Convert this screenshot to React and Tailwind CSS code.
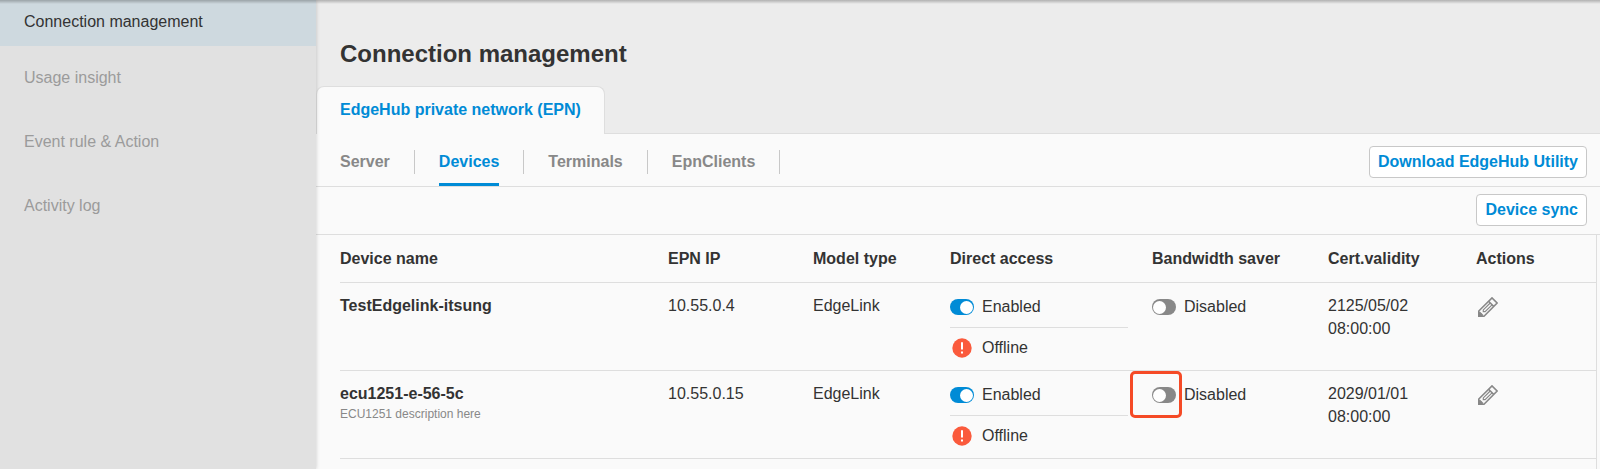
import React from "react";

const devices = [
  { id: "d1", name: "TestEdgelink-itsung", description: "", ip: "10.55.0.4", model: "EdgeLink", date: "2125/05/02", time: "08:00:00", highlighted: false },
  { id: "d2", name: "ecu1251-e-56-5c", description: "ECU1251 description here", ip: "10.55.0.15", model: "EdgeLink", date: "2029/01/01", time: "08:00:00", highlighted: true },
];

const subTabs = ["Server", "Devices", "Terminals", "EpnClients"];

function Toggle({ id, on }) {
  return (
    <input
      id={id}
      type="checkbox"
      role="switch"
      defaultChecked={on}
      className="flex h-4 w-6 shrink-0 cursor-pointer appearance-none items-center justify-start rounded-full bg-[#888888] px-px before:size-[13px] before:rounded-full before:bg-white checked:justify-end checked:bg-[#008bd6]"
    />
  );
}

function AlertIcon() {
  return (
    <svg viewBox="0 0 20 20" className="size-5" aria-hidden="true">
      <circle cx="10" cy="10" r="9.7" fill="#fa5a3c" />
      <path d="M9 4.2h2v7.4H9zM9 13.4h2v2H9z" fill="#fff" />
    </svg>
  );
}

function PencilIcon() {
  return (
    <svg viewBox="0 0 20 20" className="size-5" fill="none" stroke="#888888" strokeWidth="1.6" aria-hidden="true">
      <path d="M.8 19.2V14L14 .9 19.1 6 6 19.2z" />
      <path d="M10.6 4.3l5.1 5.1" strokeWidth="1.5" />
      <path d="M12.2 6L5.3 12.9v1.8h1.8L14 7.8" strokeWidth="1.2" />
      <path d="M.8 19.2v-3.9h1.6l2.3 2.3v1.6z" fill="#888888" stroke="#888888" strokeWidth=".8" />
    </svg>
  );
}

function Header({ children }) {
  return <th scope="col" className="h-12 border-b border-[#dedede] p-0 text-left align-middle font-bold">{children}</th>;
}

function DeviceRow({ device }) {
  const textCell = "border-b border-[#dedede] p-0 pt-[11px] align-top";
  const controlCell = "border-b border-[#dedede] p-0 pt-3 align-top";
  return (
    <tr>
      <td className={textCell}>
        <div className="font-bold">{device.name}</div>
        {device.description && <div className="mt-px text-xs leading-4 text-[#888888]">{device.description}</div>}
      </td>
      <td className={textCell}>{device.ip}</td>
      <td className={textCell}>{device.model}</td>
      <td className={controlCell}>
        <div className="mr-6 flex border-b border-[#dedede] pb-2">
          <div className="flex h-6 items-center gap-2">
            <Toggle id={`${device.id}-access`} on />
            <label htmlFor={`${device.id}-access`} className="pb-0.5">Enabled</label>
          </div>
        </div>
        <div className="mt-2 mb-2.5 flex h-6 items-center gap-2">
          <span className="flex w-6 justify-center"><AlertIcon /></span>
          <span className="pb-0.5">Offline</span>
        </div>
      </td>
      <td className={controlCell}>
        <div className="relative flex h-6 items-center gap-2">
          <Toggle id={`${device.id}-saver`} on={false} />
          <label htmlFor={`${device.id}-saver`} className="pb-0.5">Disabled</label>
          {device.highlighted && (
            <div className="pointer-events-none absolute -top-3 -left-[22px] h-[47px] w-[52px] rounded-[5px] border-3 border-[#f54a26]" />
          )}
        </div>
      </td>
      <td className={textCell}>
        <div>{device.date}</div>
        <div>{device.time}</div>
      </td>
      <td className={controlCell}>
        <button type="button" aria-label={`Edit ${device.name}`} className="mt-0.5 ml-0.5 block cursor-pointer">
          <PencilIcon />
        </button>
      </td>
    </tr>
  );
}

function Sidebar() {
  return (
    <nav className="relative z-10 w-[316px] shrink-0 bg-[#e1e1e1] text-[#9b9b9b] shadow-[0_0_4px_rgba(0,0,0,0.2)]">
      <a href="#connection" aria-current="page" className="flex h-[46px] items-center bg-[#ced9df] px-6 pb-1 text-[#333333]">Connection management</a>
      <a href="#usage" className="flex h-16 items-center px-6 pb-0.5">Usage insight</a>
      <a href="#rules" className="flex h-16 items-center px-6 pb-0.5">Event rule &amp; Action</a>
      <a href="#activity" className="flex h-16 items-center px-6 pb-0.5">Activity log</a>
    </nav>
  );
}

export default function App() {
  const button = "h-8 cursor-pointer rounded border border-[#c8c8c8] bg-white px-2 pb-px font-bold text-[#008bd6]";
  return (
    <div className="relative flex min-h-screen bg-[#fafafa] font-['Liberation_Sans',Arial,sans-serif] text-base leading-[23px] text-[#333333]">
      <Sidebar />
      <main className="min-w-0 flex-1">
        <header className="bg-[#ececec]">
          <h1 className="h-[86px] px-6 pt-[38px] text-2xl leading-8 font-bold">Connection management</h1>
          <div className="flex border-b border-[#dedede]">
            <button type="button" className="-mb-px h-12 cursor-pointer rounded-t-lg border border-b-0 border-[#dedede] bg-[#fafafa] px-[23px] pb-0.5 font-bold text-[#008bd6]">
              EdgeHub private network (EPN)
            </button>
          </div>
        </header>
        <div className="flex h-[53px] items-center justify-between border-b border-[#dedede] pr-[13px] pl-6">
          <div className="flex h-full items-center">
            {subTabs.map((tab) => (
              <div key={tab} className="flex h-full items-center">
                <button
                  type="button"
                  className={
                    tab === "Devices"
                      ? "h-full cursor-pointer border-y-3 border-t-transparent border-b-[#008bd6] pt-0.5 font-bold text-[#008bd6]"
                      : "h-full cursor-pointer pt-0.5 font-bold text-[#888888]"
                  }
                >
                  {tab}
                </button>
                <span className="mx-6 mt-1 h-6 w-px bg-[#c8c8c8]" />
              </div>
            ))}
          </div>
          <div className="flex pt-1">
            <button type="button" className={button}>Download EdgeHub Utility</button>
          </div>
        </div>
        <div className="flex h-12 items-start justify-end border-b border-[#dedede] pt-[7px] pr-[13px]">
          <button type="button" className={button}>Device sync</button>
        </div>
        <div className="mr-[3px] min-h-[234px] border-r border-[#dedede] pl-6">
          <table className="w-full table-fixed border-separate border-spacing-0">
            <colgroup>
              <col />
              <col className="w-[145px]" />
              <col className="w-[137px]" />
              <col className="w-[202px]" />
              <col className="w-[176px]" />
              <col className="w-[148px]" />
              <col className="w-[120px]" />
            </colgroup>
            <thead>
              <tr>
                <Header>Device name</Header>
                <Header>EPN IP</Header>
                <Header>Model type</Header>
                <Header>Direct access</Header>
                <Header>Bandwidth saver</Header>
                <Header>Cert.validity</Header>
                <Header>Actions</Header>
              </tr>
            </thead>
            <tbody>
              {devices.map((device) => <DeviceRow key={device.id} device={device} />)}
            </tbody>
          </table>
        </div>
      </main>
      <div className="pointer-events-none absolute inset-x-0 top-0 z-20 h-1 bg-linear-to-b from-black/25 to-transparent" />
    </div>
  );
}
